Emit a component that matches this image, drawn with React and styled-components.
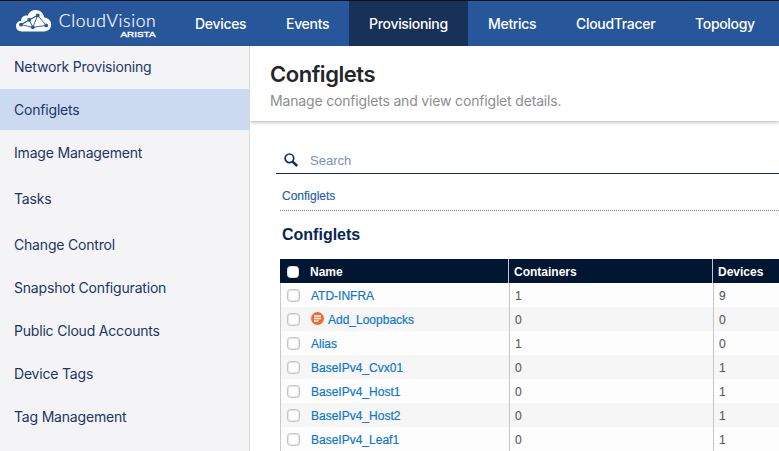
import React from "react";
import styled, { createGlobalStyle } from "styled-components";

const GlobalStyle = createGlobalStyle`
  * { box-sizing: border-box; }
  body {
    margin: 0;
    overflow: hidden;
    background: #fff;
    font-family: Inter, "Liberation Sans", sans-serif;
  }
`;

const Page = styled.div`
  height: 451px;
  display: flex;
  flex-direction: column;
  overflow: hidden;
`;

const TopBar = styled.header`
  flex: none;
  height: 46px;
  display: flex;
  background: #27569b;
  border-top: 1px solid #101216;
`;

const LogoLink = styled.div`
  width: 175px;
  flex: none;
`;

const Tab = styled.div`
  width: ${(p) => p.$width}px;
  flex: none;
  display: flex;
  align-items: center;
  padding: 0 0 1px 20px;
  white-space: nowrap;
  color: #fff;
  font-size: 14px;
  font-weight: 500;
  letter-spacing: -0.31px;
  background: ${(p) => (p.$active ? "#183158" : "transparent")};
`;

const Body = styled.div`
  flex: 1;
  display: flex;
  min-height: 0;
`;

const Sidebar = styled.nav`
  width: 250px;
  flex: none;
  background: #f4f4f7;
  border-right: 1px solid #d6d7da;
`;

const SideItem = styled.div`
  height: 41px;
  margin-bottom: ${(p) => p.$gap}px;
  padding: 0 0 1px 14px;
  display: flex;
  align-items: center;
  font-size: 14px;
  letter-spacing: -0.19px;
  color: #1b3664;
  background: ${(p) => (p.$active ? "#ccdaf1" : "transparent")};
`;

const Main = styled.main`
  flex: 1;
  min-width: 0;
`;

const PageHeading = styled.div`
  height: 75px;
  padding: 14px 0 0 20px;
  box-shadow: 0 1px 4px rgba(0, 0, 0, 0.32);
  clip-path: inset(0 0 -8px 0);
`;

const PageTitle = styled.h1`
  margin: 0;
  font-size: 22px;
  line-height: 28px;
  font-weight: 600;
  letter-spacing: -0.47px;
  color: #252629;
`;

const PageSubtitle = styled.p`
  margin: 4px 0 0;
  font-size: 14px;
  line-height: 18px;
  letter-spacing: -0.17px;
  color: #8d8d8f;
`;

const SearchBar = styled.div`
  height: 28px;
  margin: 25px 0 0 26px;
  padding: 1px 0 0 8px;
  display: flex;
  align-items: center;
  gap: 11px;
  border-bottom: 1px solid #0c2c5b;
  font: 13px/15px "Liberation Sans", sans-serif;
  color: #7590b3;
`;

const SearchLabel = styled.span`
  padding-top: 1px;
`;

const Crumb = styled.div`
  height: 37px;
  margin-left: 30px;
  padding: 15px 0 0 2px;
  font: 12px/14px "Liberation Sans", sans-serif;
  color: #245fa8;
  -webkit-text-stroke: 0.15px #245fa8;
  border-bottom: 1px dotted #858585;
`;

const SectionTitle = styled.h2`
  height: 48px;
  margin: 0 0 0 32px;
  padding-top: 14px;
  font: bold 16px/20px "Liberation Sans", sans-serif;
  color: #062657;
`;

const Table = styled.div`
  margin-left: 30px;
  font: 12px "Liberation Sans", sans-serif;
`;

const TableHead = styled.div`
  height: 24px;
  display: grid;
  grid-template-columns: 228px 204px 1fr;
  color: #fff;
  font-weight: bold;
  background: #001632;
`;

const TableRow = styled.div`
  height: 24px;
  display: grid;
  grid-template-columns: 229px 204px 1fr;
  color: #5c5c5c;
  background: #fdfdfd;
  -webkit-text-stroke: 0.15px #5c5c5c;
  &:nth-child(odd) { background: #f6f6f6; }
`;

const NameCell = styled.div`
  display: flex;
  align-items: center;
  padding: 1px 0 0 ${(p) => (p.$head ? 7 : 6)}px;
  border-left: ${(p) => (p.$head ? "none" : "1px solid #cacaca")};
`;

const Cell = styled.div`
  display: flex;
  align-items: center;
  padding: 2px 0 0 5px;
  border-left: 1px solid #c6c6c6;
`;

const Link = styled.span`
  color: #0f78cd;
  -webkit-text-stroke: 0.2px #0f78cd;
`;

const CheckBox = styled.span`
  width: ${(p) => (p.$head ? 12 : 13)}px;
  height: ${(p) => (p.$head ? 12 : 13)}px;
  margin-right: 11px;
  flex: none;
  border-radius: 3.5px;
  background: #fff;
  border: 1px solid ${(p) => (p.$head ? "#e0e0e0" : "#c3c3c3")};
  box-shadow: ${(p) => (p.$head ? "none" : "inset 0 0 1px 0.5px #cfcfcf")};
`;

const Badge = styled.svg`
  flex: none;
  margin: -2px 4px 0 0;
`;

const NODES = [[21, 24.7], [29.2, 19.8], [37.7, 15.4], [32.8, 27.3], [46.2, 25.4]];

function Logo() {
  return (
    <svg width="175" height="45" viewBox="0 1 175 45">
      <path
        fill="#fff"
        d="M21.500 31.400c-3.200 0-5.500-2.300-5.500-5.200 0-3 2.200-5.200 5-5.400.1-3 2.400-5.200 5.200-5.200.6 0 1 .1 1.400.2C29 12.200 31.600 9.900 35.500 9.900c4.800 0 8.200 3.300 8.600 7.700 4 .2 7.100 3.200 7.100 6.900 0 3.900-3 6.900-7 6.900z"
      />
      <path
        d="M21 24.700 29.200 19.800 37.700 15.400 46.200 25.400 32.800 27.300 21 24.700 37.700 15.400 32.800 27.300 29.200 19.800"
        stroke="#27569b" strokeWidth=".9" fill="none"
      />
      {NODES.map(([x, y]) => (
        <circle key={x} cx={x} cy={y} r="1.900" fill="#27569b" />
      ))}
      <text x="58.700" y="26.800" fill="#fff" fontFamily="Lato" fontWeight="300" fontSize="17.500" textLength="97" stroke="#fff" strokeWidth=".2">CloudVision</text>
      <text x="120.500" y="37" fill="#fff" fontFamily="Liberation Sans" fontSize="8" textLength="35" lengthAdjust="spacingAndGlyphs" stroke="#fff" strokeWidth=".35">ARISTA</text>
    </svg>
  );
}

function SearchIcon() {
  return (
    <svg width="15" height="15" viewBox="0 0 15 15" fill="none" stroke="#0b326d">
      <circle cx="5.400" cy="5.300" r="4.300" strokeWidth="1.700" />
      <path d="M8.600 8.600 13.200 13" strokeWidth="2.500" />
    </svg>
  );
}

function BuilderBadge() {
  return (
    <Badge width="13" height="13" viewBox="0 0 13 13">
      <circle cx="6.500" cy="6.500" r="6.500" fill="#f8682c" />
      <path d="M3 4h7M3 6.500h7M3 9h4.500" stroke="#fff" strokeWidth="1.400" />
    </Badge>
  );
}

const TABS = [
  { label: "Devices", width: 91 },
  { label: "Events", width: 83 },
  { label: "Provisioning", width: 119, active: true },
  { label: "Metrics", width: 88 },
  { label: "CloudTracer", width: 119 },
  { label: "Topology", width: 104 },
];

const SIDE_ITEMS = [
  { label: "Network Provisioning", gap: 2 },
  { label: "Configlets", gap: 2, active: true },
  { label: "Image Management", gap: 5 },
  { label: "Tasks", gap: 5 },
  { label: "Change Control", gap: 2 },
  { label: "Snapshot Configuration", gap: 2 },
  { label: "Public Cloud Accounts", gap: 2 },
  { label: "Device Tags", gap: 2 },
  { label: "Tag Management", gap: 0 },
];

const CONFIGLETS = [
  { name: "ATD-INFRA", containers: 1, devices: 9 },
  { name: "Add_Loopbacks", containers: 0, devices: 0, builder: true },
  { name: "Alias", containers: 1, devices: 0 },
  { name: "BaseIPv4_Cvx01", containers: 0, devices: 1 },
  { name: "BaseIPv4_Host1", containers: 0, devices: 1 },
  { name: "BaseIPv4_Host2", containers: 0, devices: 1 },
  { name: "BaseIPv4_Leaf1", containers: 0, devices: 1 },
];

export default function App() {
  return (
    <Page>
      <GlobalStyle />
      <TopBar>
        <LogoLink><Logo /></LogoLink>
        {TABS.map((t) => (
          <Tab key={t.label} $width={t.width} $active={t.active}>{t.label}</Tab>
        ))}
      </TopBar>
      <Body>
        <Sidebar>
          {SIDE_ITEMS.map((s) => (
            <SideItem key={s.label} $gap={s.gap} $active={s.active}>{s.label}</SideItem>
          ))}
        </Sidebar>
        <Main>
          <PageHeading>
            <PageTitle>Configlets</PageTitle>
            <PageSubtitle>Manage configlets and view configlet details.</PageSubtitle>
          </PageHeading>
          <SearchBar><SearchIcon /><SearchLabel>Search</SearchLabel></SearchBar>
          <Crumb>Configlets</Crumb>
          <SectionTitle>Configlets</SectionTitle>
          <Table>
            <TableHead>
              <NameCell $head><CheckBox $head />Name</NameCell>
              <Cell>Containers</Cell>
              <Cell>Devices</Cell>
            </TableHead>
            {CONFIGLETS.map((c) => (
              <TableRow key={c.name}>
                <NameCell>
                  <CheckBox />
                  {c.builder && <BuilderBadge />}
                  <Link>{c.name}</Link>
                </NameCell>
                <Cell>{c.containers}</Cell>
                <Cell>{c.devices}</Cell>
              </TableRow>
            ))}
          </Table>
        </Main>
      </Body>
    </Page>
  );
}
